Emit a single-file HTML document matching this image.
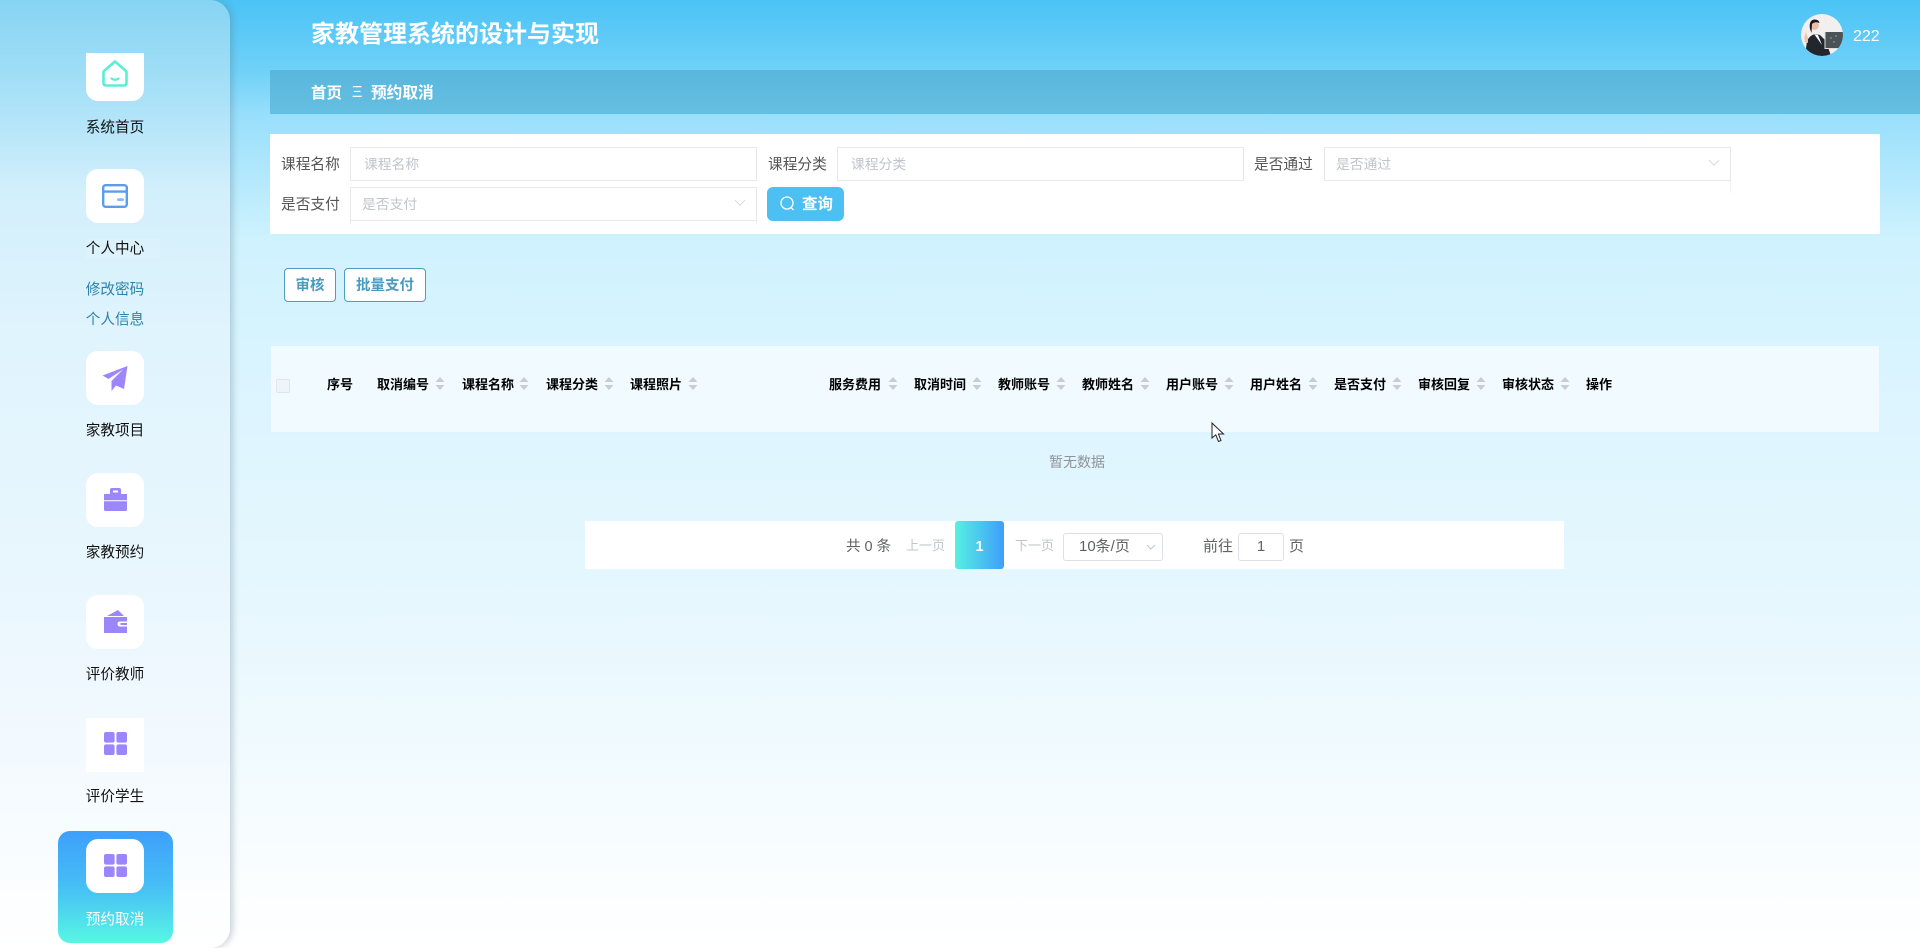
<!DOCTYPE html>
<html lang="zh">
<head>
<meta charset="utf-8">
<title>家教管理系统的设计与实现</title>
<style>
html,body{margin:0;padding:0;width:1920px;height:948px;overflow:hidden}
body{position:relative;font-family:"Liberation Sans","Noto Sans CJK SC",sans-serif;background:linear-gradient(180deg,#4bc3f6 0,#6fd1f8 70px,#98dffc 115px,#cff2fe 240px,#def5ff 420px,#e6f7fe 600px,#f5fcff 810px,#fff 948px)}
div,span,svg{position:absolute;box-sizing:border-box}
.t{white-space:nowrap}
#side{left:0;top:0;width:230px;height:948px;background:linear-gradient(180deg,#86d4f3 0,#a6e0f7 90px,#d2effc 190px,#e0f4fd 340px,#e8f6fd 560px,#f3faff 760px,#fff 948px);border-radius:0 20px 20px 0;box-shadow:3px 0 7px rgba(90,120,140,.32)}
.box{left:86px;width:58px;height:54px;background:#fff;border-radius:12px}
.lab{left:0;width:230px;text-align:center;font-size:14.6px;line-height:20px;color:#111}
.sub{color:#2a84a8}
.f{font-size:14.7px;line-height:20px;color:#555}
.in{background:#fff;border:1px solid #e8e8e8;height:34px}
.ph{font-size:13.8px;line-height:20px;color:#c0c4cc}
.th{top:376px;font-size:13px;line-height:18px;font-weight:700;color:#000}
.so{top:377px;width:10px;height:13px}
.btn{top:268px;height:34px;background:#fff;border:1px solid #4f9dbf;border-radius:4px;color:#4b9bbf;font-weight:700;font-size:14.5px;line-height:34px;text-align:center}
.pg{color:#606266;font-size:15px;line-height:20px}
</style>
</head>
<body>

<!-- sidebar -->
<div id="side">
  <div class="box" style="top:53px;height:48px;border-radius:0 0 12px 12px"></div>
  <svg style="left:100px;top:58px" width="30" height="30" viewBox="0 0 30 30"><path d="M15 3.5 L26 13 Q26.5 13.5 26.5 14.5 V25 Q26.5 27.5 24 27.5 H6 Q3.5 27.5 3.5 25 V14.5 Q3.5 13.5 4 13 Z" fill="none" stroke="#5aeed6" stroke-width="2.6" stroke-linejoin="round"/><path d="M11.5 20.5 Q15 23 18.5 20.5" fill="none" stroke="#5aeed6" stroke-width="2.2" stroke-linecap="round"/></svg>
  <div class="t lab" style="top:118px">系统首页</div>

  <div class="box" style="top:169px"></div>
  <svg style="left:102px;top:184px" width="26" height="24" viewBox="0 0 26 24"><rect x="1.2" y="1.2" width="23.6" height="21.6" rx="2.5" fill="none" stroke="#5a9cf0" stroke-width="2.4"/><path d="M1.5 7.6H24.5" stroke="#5a9cf0" stroke-width="2.4"/><rect x="15" y="14.2" width="7" height="2.8" rx="1.4" fill="#8fb8f2"/></svg>
  <div style="left:86px;top:239px;width:74px;height:20px;background:rgba(255,255,255,.12)"></div>
  <div class="t lab" style="top:239px">个人中心</div>
  <div class="t lab sub" style="top:280px">修改密码</div>
  <div class="t lab sub" style="top:310px">个人信息</div>

  <div class="box" style="top:351px"></div>
  <svg style="left:102px;top:366px" width="26" height="25" viewBox="0 0 26 25"><path d="M25.5 0 L0.5 9.5 L6.5 13 L21 3.5 L9.5 15 V25 L14 19.5 L22 23 Z" fill="#9b87fb"/></svg>
  <div class="t lab" style="top:421px">家教项目</div>

  <div class="box" style="top:473px"></div>
  <svg style="left:104px;top:488px" width="23" height="23" viewBox="0 0 23 23"><path d="M6 6V2Q6 0 8 0H15Q17 0 17 2V6H23V12.3H0V6Z M9 2.5V4.5H14V2.5Z" fill="#9b87fb" fill-rule="evenodd"/><path d="M0 13.3H23V21.5Q23 23 21.5 23H1.5Q0 23 0 21.5Z" fill="#9b87fb"/></svg>
  <div class="t lab" style="top:543px">家教预约</div>

  <div class="box" style="top:595px"></div>
  <svg style="left:104px;top:610px" width="23" height="23" viewBox="0 0 23 23"><path d="M3 6 L14 0 L20 6Z" fill="#9b87fb"/><path d="M0 7H23V11.5H16Q13.5 11.5 13.5 14T16 16.5H23V23H0Z M16.5 13V15H23V13Z" fill="#9b87fb" fill-rule="evenodd"/></svg>
  <div class="t lab" style="top:665px">评价教师</div>

  <div class="box" style="top:718px;border-radius:2px"></div>
  <svg style="left:104px;top:732px" width="23" height="23" viewBox="0 0 23 23" fill="#9b87fb"><rect width="10.6" height="10.6" rx="2"/><rect x="12.4" width="10.6" height="10.6" rx="2"/><rect y="12.4" width="10.6" height="10.6" rx="2"/><rect x="12.4" y="12.4" width="10.6" height="10.6" rx="2"/></svg>
  <div class="t lab" style="top:787px">评价学生</div>

  <div style="left:58px;top:831px;width:115px;height:112px;border-radius:12px;background:linear-gradient(180deg,#3e9ffb 0,#46bff5 50%,#57f6e4 100%)"></div>
  <div class="box" style="top:839px"></div>
  <svg style="left:104px;top:854px" width="23" height="23" viewBox="0 0 23 23" fill="#9b87fb"><rect width="10.6" height="10.6" rx="2"/><rect x="12.4" width="10.6" height="10.6" rx="2"/><rect y="12.4" width="10.6" height="10.6" rx="2"/><rect x="12.4" y="12.4" width="10.6" height="10.6" rx="2"/></svg>
  <div class="t lab" style="top:910px;color:#fff">预约取消</div>
</div>

<!-- header -->
<div class="t" style="left:311px;top:20px;font-size:24px;line-height:30px;font-weight:700;color:#fff">家教管理系统的设计与实现</div>
<svg style="left:1801px;top:14px" width="42" height="42" viewBox="0 0 42 42">
  <defs><clipPath id="av"><circle cx="21" cy="21" r="21"/></clipPath></defs>
  <g clip-path="url(#av)">
    <rect width="42" height="42" fill="#f3efee"/>
    <path d="M4 42 L6 27 Q9 21 14 20 L19 21 L25 27 L28 36 L30 42Z" fill="#23262c"/>
    <path d="M13 20 L17 21 L21 31 L16 24Z" fill="#fff"/>
    <circle cx="13.5" cy="11.5" r="4.4" fill="#e8bfa8"/>
    <path d="M9 15 Q7.5 6 13.5 5.5 Q18 5.5 18.5 9 Q14 7 11 10 L10.5 19Z" fill="#1c1a1c"/>
    <path d="M3 24 L5 18 L7 24 L7 29 L4 28Z" fill="#ecc5ae"/>
    <rect x="24" y="18" width="18" height="16" fill="#4c5356"/>
    <path d="M24 18V34.5H37" fill="none" stroke="#ddd" stroke-width="1"/>
    <circle cx="30" cy="24" r=".7" fill="#aab"/><circle cx="35" cy="22" r=".7" fill="#aab"/><circle cx="33" cy="28" r=".7" fill="#aab"/>
  </g>
</svg>
<div class="t" style="left:1853px;top:27px;font-size:16px;line-height:20px;color:#fff">222</div>

<!-- breadcrumb -->
<div style="left:270px;top:70px;width:1650px;height:44px;background:linear-gradient(180deg,#5ab6dc,#65bfe2)"></div>
<div class="t" style="left:311px;top:84px;font-size:15.5px;line-height:20px;font-weight:700;color:#fff">首页</div>
<div class="t" style="left:352px;top:83px;font-size:16px;line-height:20px;color:#fff">Ξ</div>
<div class="t" style="left:371px;top:84px;font-size:15.7px;line-height:20px;font-weight:700;color:#fff">预约取消</div>

<!-- search -->
<div style="left:270px;top:134px;width:1610px;height:100px;background:#fff"></div>
<div class="t f" style="left:281px;top:155px">课程名称</div>
<div class="in" style="left:350px;top:147px;width:407px"></div>
<div class="t ph" style="left:364px;top:155px">课程名称</div>
<div class="t f" style="left:768px;top:155px">课程分类</div>
<div class="in" style="left:837px;top:147px;width:407px"></div>
<div class="t ph" style="left:851px;top:155px">课程分类</div>
<div class="t f" style="left:1254px;top:155px">是否通过</div>
<div class="in" style="left:1324px;top:147px;width:407px"></div>
<div style="left:1730px;top:181px;width:1px;height:12px;background:#f3f3f3"></div>
<div class="t ph" style="left:1336px;top:155px">是否通过</div>
<svg style="left:1708px;top:159px" width="12" height="8" viewBox="0 0 12 8"><path d="M1 1.2L6 6.2L11 1.2" fill="none" stroke="#d4d7dd" stroke-width="1"/></svg>
<div class="t f" style="left:281px;top:195px">是否支付</div>
<div class="in" style="left:350px;top:187px;width:407px"></div>
<div style="left:350px;top:221px;width:1px;height:3px;background:#ececec"></div>
<div style="left:756px;top:221px;width:1px;height:3px;background:#ececec"></div>
<div class="t ph" style="left:362px;top:195px">是否支付</div>
<svg style="left:734px;top:199px" width="12" height="8" viewBox="0 0 12 8"><path d="M1 1.2L6 6.2L11 1.2" fill="none" stroke="#d4d7dd" stroke-width="1"/></svg>
<div style="left:767px;top:187px;width:77px;height:34px;background:#4cc0f2;border-radius:6px"></div>
<svg style="left:779px;top:195px" width="17" height="17" viewBox="0 0 17 17"><circle cx="8" cy="8" r="6" fill="none" stroke="#fff" stroke-width="1.3"/><path d="M11.8 12.2L14.5 15" stroke="#fff" stroke-width="1.3"/></svg>
<div class="t" style="left:802px;top:195px;font-size:15.5px;line-height:20px;font-weight:700;color:#fff">查询</div>

<!-- actions -->
<div class="btn t" style="left:284px;width:52px">审核</div>
<div class="btn t" style="left:344px;width:82px">批量支付</div>

<!-- table head -->
<div style="left:271px;top:346px;width:1608px;height:86px;background:#f0faff"></div>
<div style="left:276px;top:379px;width:14px;height:14px;background:#edf5fa;border:1px solid #dfe6ec;border-radius:2px"></div>
<div class="t th" style="left:327px">序号</div>
<div class="t th" style="left:377px">取消编号</div>
<div class="t th" style="left:462px">课程名称</div>
<div class="t th" style="left:546px">课程分类</div>
<div class="t th" style="left:630px">课程照片</div>
<div class="t th" style="left:829px">服务费用</div>
<div class="t th" style="left:914px">取消时间</div>
<div class="t th" style="left:998px">教师账号</div>
<div class="t th" style="left:1082px">教师姓名</div>
<div class="t th" style="left:1166px">用户账号</div>
<div class="t th" style="left:1250px">用户姓名</div>
<div class="t th" style="left:1334px">是否支付</div>
<div class="t th" style="left:1418px">审核回复</div>
<div class="t th" style="left:1502px">审核状态</div>
<div class="t th" style="left:1586px">操作</div>
<svg class="so" style="left:435px" viewBox="0 0 10 13"><path d="M5 0L9.5 5H.5Z M.5 8H9.5L5 13Z" fill="#c8ccd3"/></svg>
<svg class="so" style="left:519px" viewBox="0 0 10 13"><path d="M5 0L9.5 5H.5Z M.5 8H9.5L5 13Z" fill="#c8ccd3"/></svg>
<svg class="so" style="left:604px" viewBox="0 0 10 13"><path d="M5 0L9.5 5H.5Z M.5 8H9.5L5 13Z" fill="#c8ccd3"/></svg>
<svg class="so" style="left:688px" viewBox="0 0 10 13"><path d="M5 0L9.5 5H.5Z M.5 8H9.5L5 13Z" fill="#c8ccd3"/></svg>
<svg class="so" style="left:888px" viewBox="0 0 10 13"><path d="M5 0L9.5 5H.5Z M.5 8H9.5L5 13Z" fill="#c8ccd3"/></svg>
<svg class="so" style="left:972px" viewBox="0 0 10 13"><path d="M5 0L9.5 5H.5Z M.5 8H9.5L5 13Z" fill="#c8ccd3"/></svg>
<svg class="so" style="left:1056px" viewBox="0 0 10 13"><path d="M5 0L9.5 5H.5Z M.5 8H9.5L5 13Z" fill="#c8ccd3"/></svg>
<svg class="so" style="left:1140px" viewBox="0 0 10 13"><path d="M5 0L9.5 5H.5Z M.5 8H9.5L5 13Z" fill="#c8ccd3"/></svg>
<svg class="so" style="left:1224px" viewBox="0 0 10 13"><path d="M5 0L9.5 5H.5Z M.5 8H9.5L5 13Z" fill="#c8ccd3"/></svg>
<svg class="so" style="left:1308px" viewBox="0 0 10 13"><path d="M5 0L9.5 5H.5Z M.5 8H9.5L5 13Z" fill="#c8ccd3"/></svg>
<svg class="so" style="left:1392px" viewBox="0 0 10 13"><path d="M5 0L9.5 5H.5Z M.5 8H9.5L5 13Z" fill="#c8ccd3"/></svg>
<svg class="so" style="left:1476px" viewBox="0 0 10 13"><path d="M5 0L9.5 5H.5Z M.5 8H9.5L5 13Z" fill="#c8ccd3"/></svg>
<svg class="so" style="left:1560px" viewBox="0 0 10 13"><path d="M5 0L9.5 5H.5Z M.5 8H9.5L5 13Z" fill="#c8ccd3"/></svg>

<div class="t" style="left:1049px;top:452px;font-size:14px;line-height:20px;color:#909399">暂无数据</div>

<!-- cursor -->
<svg style="left:1211px;top:422px" width="14" height="21" viewBox="0 0 14 21"><path d="M1 1V16L4.8 12.8L7.5 19.5L10 18.5L7.4 12H12.5Z" fill="#fff" stroke="#222" stroke-width="1"/></svg>

<!-- pagination -->
<div style="left:585px;top:521px;width:979px;height:48px;background:#fff"></div>
<div class="t pg" style="left:846px;top:537px;font-size:14.5px">共 0 条</div>
<div class="t" style="left:906px;top:536px;font-size:13px;line-height:20px;color:#c0c4cc">上一页</div>
<div style="left:955px;top:521px;width:49px;height:48px;border-radius:3px;background:linear-gradient(90deg,#57f0e2,#3e9ffb)"></div>
<div class="t" style="left:955px;top:537px;width:49px;text-align:center;font-size:14.5px;line-height:20px;font-weight:700;color:#fff">1</div>
<div class="t" style="left:1015px;top:536px;font-size:13px;line-height:20px;color:#c0c4cc">下一页</div>
<div style="left:1063px;top:533px;width:100px;height:28px;border:1px solid #dcdfe6;border-radius:3px;background:#fff"></div>
<div class="t pg" style="left:1079px;top:537px">10条/页</div>
<svg style="left:1146px;top:544px" width="10" height="7" viewBox="0 0 10 7"><path d="M1 1L5 5L9 1" fill="none" stroke="#c0c4cc" stroke-width="1"/></svg>
<div class="t pg" style="left:1203px;top:537px">前往</div>
<div style="left:1238px;top:533px;width:46px;height:28px;border:1px solid #dcdfe6;border-radius:3px;background:#fff"></div>
<div class="t pg" style="left:1238px;top:537px;width:46px;text-align:center">1</div>
<div class="t pg" style="left:1289px;top:537px">页</div>

</body>
</html>
